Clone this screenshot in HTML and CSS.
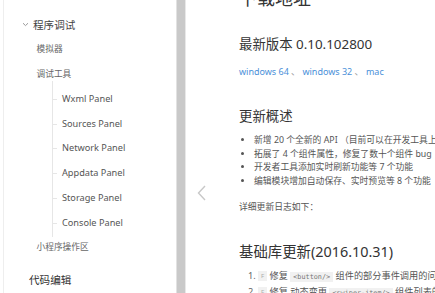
FILE: index.html
```html
<!DOCTYPE html>
<html lang="zh">
<head>
<meta charset="utf-8">
<link rel="stylesheet" href="styles.css">
</head>
<body>
<div class="page">
  <aside class="sidebar">
    <div class="nav-group">
      <div class="nav-title"><span class="caret"><svg width="7" height="5" viewBox="0 0 7 5"><path d="M1 1.2 L3.5 3.6 L6 1.2" fill="none" stroke="#999" stroke-width="1"/></svg></span>程序调试</div>
      <div class="nav-sub">模拟器</div>
      <div class="nav-sub">调试工具</div>
      <div class="tree">
        <div class="tree-item">Wxml Panel</div>
        <div class="tree-item">Sources Panel</div>
        <div class="tree-item">Network Panel</div>
        <div class="tree-item">Appdata Panel</div>
        <div class="tree-item">Storage Panel</div>
        <div class="tree-item">Console Panel</div>
      </div>
      <div class="nav-sub">小程序操作区</div>
    </div>
    <div class="nav-title nav-next">代码编辑</div>
  </aside>
  <div class="divider"></div>
  <main class="content">
    <h2 class="h-top">下载地址</h2>
    <h3 class="h-sec h-ver">最新版本 0.10.102800</h3>
    <p class="links"><a>windows 64</a> 、 <a>windows 32</a> 、 <a>mac</a></p>
    <h3 class="h-sec h-sum">更新概述</h3>
    <ul class="bullets">
      <li>新增 20 个全新的 API （目前可以在开发工具上调试）</li>
      <li>拓展了 4 个组件属性，修复了数十个组件 bug</li>
      <li>开发者工具添加实时刷新功能等 7 个功能</li>
      <li>编辑模块增加自动保存、实时预览等 8 个功能</li>
    </ul>
    <p class="note">详细更新日志如下：</p>
    <h3 class="h-sec h-lib">基础库更新(2016.10.31)</h3>
    <ol class="changes">
      <li><span class="tag">F</span> 修复 <code>&lt;button/&gt;</code> 组件的部分事件调用的问题</li>
      <li><span class="tag">F</span> 修复 动态变更 <code>&lt;swiper-item/&gt;</code> 组件列表的问题</li>
    </ol>
    <div class="prev"><svg width="9" height="16" viewBox="0 0 9 16"><path d="M8 1 L1.5 8 L8 15" fill="none" stroke="#c8c8c8" stroke-width="1.4"/></svg></div>
  </main>
</div>
</body>
</html>
```
FILE: styles.css
```css
html, body {
  margin: 0;
  padding: 0;
  background: #fff;
}
body {
  font-family: "Noto Sans", "Noto Sans CJK SC", sans-serif;
  color: #555;
  overflow: hidden;
}
.page {
  display: flex;
  height: 293px;
  overflow: hidden;
}
.sidebar {
  width: 172px;
  margin-left: 3px;
  border-left: 1px solid #eeeeee;
  box-sizing: border-box;
  padding-top: 12.6px;
  flex: none;
}
.nav-title {
  display: flex;
  align-items: center;
  height: 24.75px;
  padding-left: 25px;
  font-size: 10.6px;
  color: #444;
}
.caret {
  width: 8px;
  margin-left: -7px;
  margin-right: 3px;
  display: flex;
  align-items: center;
}
.nav-sub {
  height: 24.75px;
  line-height: 24.75px;
  padding-left: 32.5px;
  font-size: 8.7px;
  color: #666;
}
.tree {
  margin-left: 48px;
  border-left: 1px solid #e6e6e6;
  margin-top: -6px;
  padding-top: 6px;
  margin-bottom: -2px;
  padding-bottom: 2px;
}
.tree-item {
  position: relative;
  height: 24.75px;
  line-height: 24.75px;
  padding-left: 9px;
  font-size: 9.2px;
  color: #555;
}
.tree-item::before {
  content: "";
  position: absolute;
  left: 0;
  top: 12px;
  width: 4px;
  border-top: 1px solid #e6e6e6;
}
.nav-next {
  margin-top: 7.5px;
  color: #333;
}
.divider {
  flex: none;
  width: 10px;
  margin-left: 1px;
  box-sizing: border-box;
  border-left: 1px solid #e2e2e2;
  border-right: 1px solid #e8e8e8;
  background: #c9c9c9;
}
.content {
  position: relative;
  flex: 1;
  padding-left: 53px;
  min-width: 0;
  white-space: nowrap;
  color: #555;
}
.h-top {
  margin: -14px 0 0;
  font-size: 18px;
  line-height: 24px;
  font-weight: normal;
  color: #333;
}
.h-sec {
  margin: 0;
  font-weight: normal;
  font-size: 13.4px;
  line-height: 20px;
  color: #333;
}
.h-ver { margin-top: 24px; }
.links {
  margin: 11px 0 0;
  font-size: 9px;
  line-height: 14px;
  color: #999;
}
.links a { color: #4a90d9; }
.h-sum { margin-top: 27px; }
.bullets {
  margin: 7.85px 0 0;
  padding-left: 15px;
  font-size: 8.8px;
  line-height: 13.7px;
  list-style: disc;
}
.note {
  margin: 11.35px 0 0;
  font-size: 8.8px;
  line-height: 14px;
}
.h-lib { margin-top: 27.7px; font-size: 14.4px; }
.changes {
  margin: 7.5px 0 0;
  padding-left: 19px;
  font-size: 9.2px;
  line-height: 13.6px;
}
.changes li::marker { color: #666; }
.tag {
  display: inline-block;
  padding: 0 3px;
  background: #f1f1f1;
  color: #aaa;
  font-size: 6px;
  line-height: 10px;
  vertical-align: 1px;
}
code {
  font-family: "DejaVu Sans Mono", monospace;
  font-size: 6.8px;
  background: #f1f1f1;
  color: #777;
  padding: 1px 3px;
}
.prev {
  position: absolute;
  left: 11px;
  top: 184px;
  width: 9px;
  height: 16px;
}
```
